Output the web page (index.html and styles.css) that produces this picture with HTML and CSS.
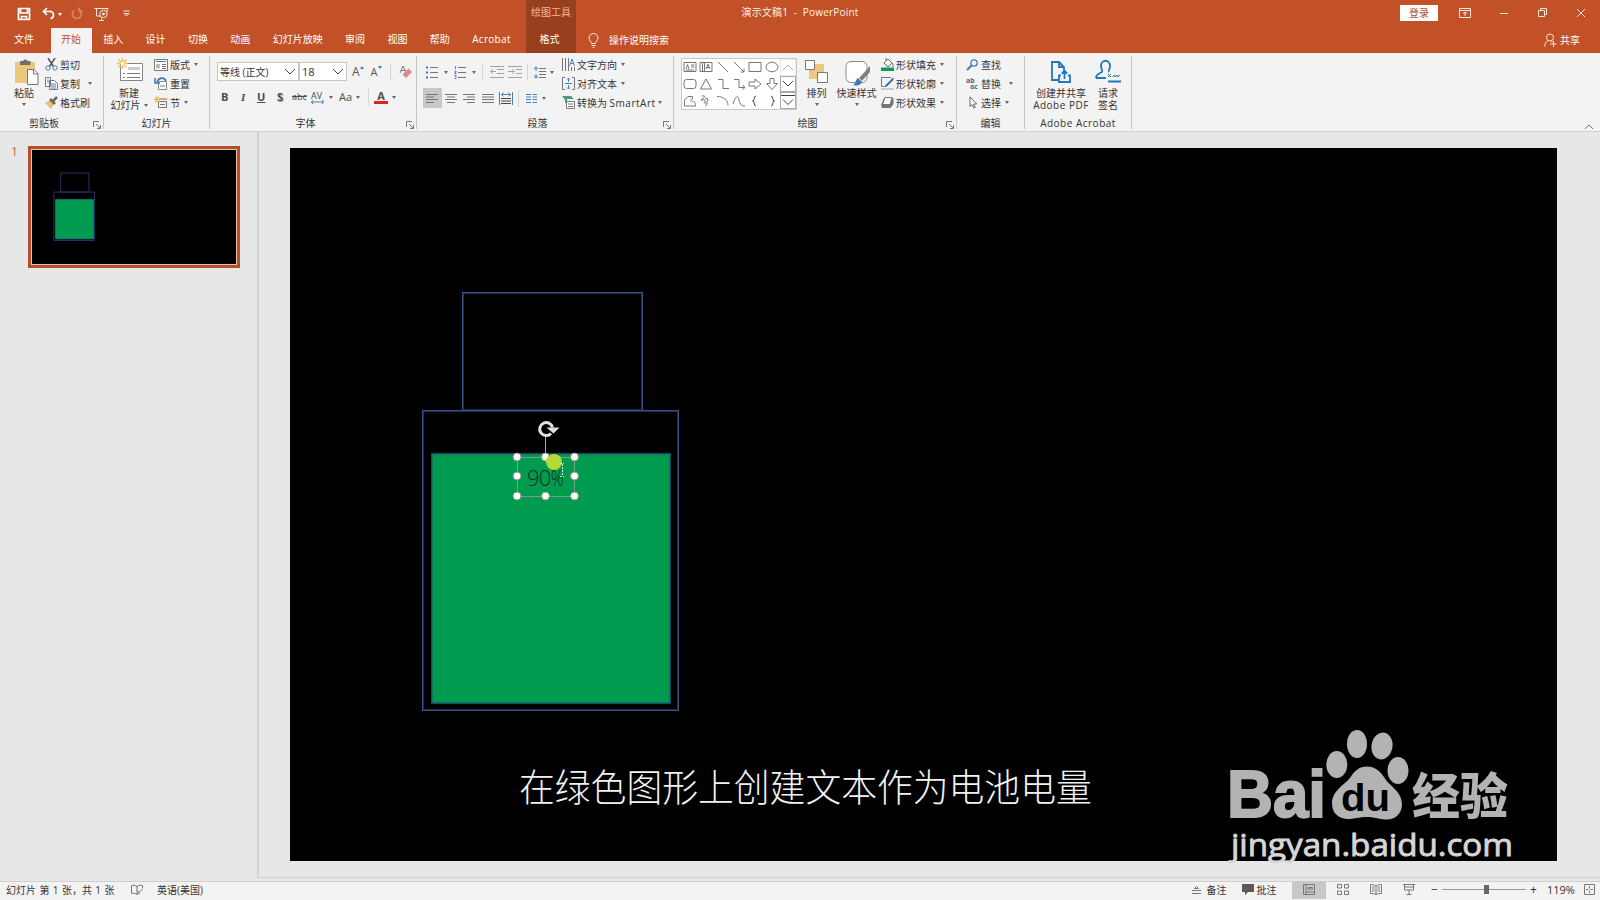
FILE: index.html
```html
<!DOCTYPE html>
<html lang="zh-CN">
<head>
  <meta charset="utf-8">
  <title>演示文稿1 - PowerPoint</title>
  <link rel="stylesheet" href="styles.css">
</head>
<body>
  <header class="titlebar">
    <div class="quick">
      <svg width="14" height="14" viewBox="0 0 14 14"><path d="M1.5 1.5h11v11h-11z M3.500 2v4h7v-4 M4.500 12.500V9.500h5v3" class="w2"/></svg>
      <svg class="undo" width="13" height="14" viewBox="0 0 13 14"><path d="M5 1 1.500 4.500 5 8 M2 4.500h5.500a3.500 3.500 0 0 1 1 7" class="w2"/></svg>
      <i class="caret light"></i>
      <svg class="redo" width="12" height="14" viewBox="0 0 12 14"><path d="M3 3.500a4.500 4.500 0 1 0 5.500-.2 M8 .8v3.200h3.500" class="w2"/></svg>
      <svg class="show" width="15" height="14" viewBox="0 0 15 14"><path d="M.5 1.500h14 M2.500 2v7h4 M13 2v3 M5 13.500h5 M7.500 11v2.500" class="w1"/><circle cx="9.500" cy="7" r="3.700" class="w1"/><path d="M8.500 5.300 11.500 7 8.500 8.700z" fill="#fff"/></svg>
      <svg class="more" width="7" height="8" viewBox="0 0 7 8"><path d="M.5 1h6 M1 3.500h5L3.500 6z" class="w1"/></svg>
    </div>
    <div class="context">绘图工具</div>
    <div class="doc-title">演示文稿1 &nbsp;-&nbsp; PowerPoint</div>
    <div class="window">
      <button class="login">登录</button>
      <svg width="12" height="10" viewBox="0 0 12 10"><path d="M.5.500h11v9H.5z M.5 2.500h11 M6 8V4 M4 5.500l2-1.500 2 1.500" class="w1"/></svg>
      <svg width="10" height="10" viewBox="0 0 10 10"><path d="M1 5.500h8" class="w1"/></svg>
      <svg width="10" height="10" viewBox="0 0 10 10"><path d="M.5 2.500h6v6h-6z M2.500 2.500v-2h6v6h-2" class="w1"/></svg>
      <svg width="10" height="10" viewBox="0 0 10 10"><path d="M1 1l8 8 M9 1L1 9" class="w1"/></svg>
    </div>
  </header>

  <nav class="tabs">
    <a class="file">文件</a>
    <a class="active">开始</a>
    <a>插入</a>
    <a>设计</a>
    <a>切换</a>
    <a>动画</a>
    <a>幻灯片放映</a>
    <a>审阅</a>
    <a>视图</a>
    <a>帮助</a>
    <a class="acrobat">Acrobat</a>
    <a class="format">格式</a>
    <svg class="bulb" width="11" height="15" viewBox="0 0 11 15"><path d="M3.500 10.500C3.500 8.500 1 7.500 1 5a4.500 4.500 0 0 1 9 0c0 2.500-2.500 3.500-2.500 5.500z M3.500 12.500h4 M4.500 14.300h2" class="w1"/></svg>
    <span>操作说明搜索</span>
    <div class="share">
      <svg width="13" height="14" viewBox="0 0 13 14"><circle cx="6" cy="4.500" r="3.500" class="w1"/><path d="M.7 13.500c0-3 1.500-5 3.500-5.700 M7.500 8l1 1 M6 11h6.500 M9.500 8v6" class="w1"/></svg>
      共享
    </div>
  </nav>

  <section class="ribbon">
    <div class="group clipboard">
      <div class="tools">
        <div class="big paste">
          <svg width="25" height="27" viewBox="0 0 25 27"><path d="M1 3h20v21H1z" fill="#ecc77d"/><path d="M6 2h3a2.500 2.500 0 0 1 4.500 0h3v4H6z" fill="#707070"/><path d="M13.500 10.500h6.500l4 4v11H13.500z" fill="#fff" stroke="#777"/><path d="M19.500 10.500v4.500h4.500" class="g1"/></svg>
          <span>粘贴</span><i class="caret"></i>
        </div>
        <div class="stack">
          <div><svg width="13" height="13" viewBox="0 0 13 13"><path d="M3 0l5.500 8.500 M10 0L4.500 8.500" stroke="#555" stroke-width="1.500"/><circle cx="3" cy="10" r="2.200" class="b1"/><circle cx="10" cy="10" r="2.200" class="b1"/></svg>剪切</div>
          <div><svg width="13" height="13" viewBox="0 0 13 13"><path d="M.5.500h5v9h-5z M4.500 3.500h5l3 3v6h-8z" fill="#fff" stroke="#777"/><path d="M2 3h2 M2 5h2 M6 7h5 M6 9h5 M6 11h5" class="b1"/></svg>复制<i class="caret far"></i></div>
          <div><svg width="13" height="13" viewBox="0 0 13 13"><path d="M0 7l5-3 4 4-3 5z" fill="#ecc07a"/><path d="M5 3l5 5 M8 5l4-4" stroke="#666" stroke-width="2.500"/></svg>格式刷</div>
        </div>
      </div>
      <div class="caption"><span>剪贴板</span><svg class="launch" width="8" height="8" viewBox="0 0 8 8"><path d="M.5 6V.5H6 M3 3l4 4 M7.500 4v3.500H4" class="g1"/></svg></div>
    </div>

    <div class="group slides">
      <div class="tools">
        <div class="big new-slide">
          <svg width="26" height="27" viewBox="0 0 26 27"><path d="M3.500 5.500h22v17h-22z" fill="#fff" stroke="#858585"/><path d="M11 9h12v3H11z" fill="#ccc"/><path d="M6 15.500h2 M10 15.500h13 M6 19.500h2 M10 19.500h13" class="g1"/><path d="M5.500 0v11 M0 5.500h11 M1.500 1.500l8 8 M9.500 1.500l-8 8" stroke="#edc15f" stroke-width="1.500"/><circle cx="5.500" cy="5.500" r="1.800" fill="#fff"/></svg>
          <span>新建</span><span>幻灯片<i class="caret"></i></span>
        </div>
        <div class="stack">
          <div><svg width="14" height="12" viewBox="0 0 14 12"><path d="M.5.500h13v11H.5z" fill="#fff" stroke="#777"/><path d="M2 2.500h10" class="b1"/><path d="M2 5h4v4.500H2z" fill="#bbb"/><path d="M8 5.500h4 M8 7.500h4 M8 9.500h4" class="g1"/></svg>版式<i class="caret"></i></div>
          <div><svg width="14" height="13" viewBox="0 0 14 13"><path d="M4.500 4.500h8v8h-8z" fill="#fff" stroke="#888"/><path d="M6 9h5" class="g1"/><path d="M12 4C10 0 5 0 3 5 M1 1v5h5" stroke="#3f78b5" stroke-width="1.600" fill="none"/></svg>重置</div>
          <div><svg width="14" height="13" viewBox="0 0 14 13"><path d="M5 3h8" stroke="#db8b48" stroke-width="1.500"/><path d="M4.500 5.500h8v6h-8z M6 8.500h5" class="g1"/><path d="M3 0v7 M0 3.500h6 M1 1l4 5 M5 1L1 6" stroke="#e8b25a"/></svg>节<i class="caret"></i></div>
        </div>
      </div>
      <div class="caption"><span>幻灯片</span></div>
    </div>

    <div class="group font">
      <div class="tools two-rows">
        <div class="row">
          <div class="combo name">等线 (正文)<svg width="12" height="7" viewBox="0 0 12 7"><path d="M1 1l5 5 5-5" class="k1"/></svg></div>
          <div class="combo size">18<svg width="12" height="7" viewBox="0 0 12 7"><path d="M1 1l5 5 5-5" class="k1"/></svg></div>
          <span class="grow">A<svg width="4" height="3" viewBox="0 0 4 3"><path d="M0 3l2-3 2 3z" fill="#3f78b5"/></svg></span>
          <span class="shrink">A<svg width="4" height="3" viewBox="0 0 4 3"><path d="M0 0l2 3 2-3z" fill="#3f78b5"/></svg></span>
          <i class="rule"></i>
          <svg class="clear" width="13" height="13" viewBox="0 0 13 13"><path d="M1 8l3-7 3 6 M2 5.500h4" class="g1"/><path d="M3.500 9.500l6-6L13 7l-6 6z" fill="#e5838f"/></svg>
        </div>
        <div class="row format-row">
          <b>B</b><em>I</em><u>U</u><b class="shadow">S</b><s>abc</s>
          <span class="av">AV<svg width="13" height="4" viewBox="0 0 13 4"><path d="M0 2h13 M2 0L.5 2 2 4 M11 0l1.500 2L11 4" class="b1"/></svg></span><i class="caret"></i>
          <span class="aa">Aa</span><i class="caret"></i>
          <i class="rule"></i>
          <span class="color">A</span><i class="caret"></i>
        </div>
      </div>
      <div class="caption"><span>字体</span><svg class="launch" width="8" height="8" viewBox="0 0 8 8"><path d="M.5 6V.5H6 M3 3l4 4 M7.500 4v3.500H4" class="g1"/></svg></div>
    </div>

    <div class="group paragraph">
      <div class="tools">
        <div class="two-rows para-tools">
          <div class="row">
            <svg width="12" height="13" viewBox="0 0 12 13"><path d="M4 1.500h8 M4 6.500h8 M4 11.500h8" class="g1"/><path d="M0 1.500h2 M0 6.500h2 M0 11.500h2" stroke="#3f78b5" stroke-width="2"/></svg><i class="caret c1"></i>
            <svg width="12" height="13" viewBox="0 0 12 13"><path d="M4 1.500h8 M4 6.500h8 M4 11.500h8" class="g1"/><path d="M1.500 0v3 M.5 5h1.500v1L.5 7.500h2 M.5 9.500h1.500v3H.5" class="b1"/></svg><i class="caret c1"></i>
            <i class="rule"></i>
            <svg class="faded indent" width="14" height="12" viewBox="0 0 14 12"><path d="M0 .5h14 M7 3.500h7 M7 7.500h7 M0 11.500h14 M0 5.500h6 M3 3L.5 5.500 3 8" class="g1"/></svg>
            <svg class="faded outdent" width="14" height="12" viewBox="0 0 14 12"><path d="M0 .5h14 M8 3.500h6 M8 7.500h6 M0 11.500h14 M0 5.500h6 M4 3l2.500 2.500L4 8" class="g1"/></svg>
            <i class="rule r2"></i>
            <svg class="spacing" width="12" height="13" viewBox="0 0 12 13"><path d="M5 2.500h7 M5 5.500h7 M5 8.500h7 M5 11.500h7" class="g1"/><path d="M2 .5v4.500 M0 3l2-2 2 2 M2 8v4.500 M0 10l2 2 2-2" class="b1"/></svg><i class="caret c2"></i>
          </div>
          <div class="row align">
            <span class="on"><svg width="12" height="9" viewBox="0 0 12 9"><path d="M0 .5h12 M0 3h8 M0 5.500h12 M0 8.500h8" class="g1"/></svg></span>
            <span><svg width="12" height="9" viewBox="0 0 12 9"><path d="M0 .5h12 M2 3h8 M0 5.500h12 M2 8.500h8" class="g1"/></svg></span>
            <span><svg width="12" height="9" viewBox="0 0 12 9"><path d="M0 .5h12 M4 3h8 M0 5.500h12 M4 8.500h8" class="g1"/></svg></span>
            <span><svg width="12" height="9" viewBox="0 0 12 9"><path d="M0 .5h12 M0 3h12 M0 5.500h12 M0 8.500h12" class="g1"/></svg></span>
            <span><svg width="14" height="13" viewBox="0 0 14 13"><path d="M.5 0v13 M13.500 0v13 M2.500 2.500h9 M4.500.5l-2 2 2 2 M9.500.5l2 2-2 2" class="b1"/><path d="M2 6.500h10 M2 9h10 M2 11.500h10" class="k1"/></svg></span>
            <i class="rule"></i>
            <svg class="cols" width="11" height="9" viewBox="0 0 11 9"><path d="M0 .5h5 M0 3h5 M0 5.500h5 M0 8.500h5 M6.500.5h5 M6.500 3h5 M6.500 5.500h5 M6.500 8.500h5" class="b1"/></svg><i class="caret"></i>
          </div>
        </div>
        <div class="stack">
          <div><svg width="13" height="13" viewBox="0 0 13 13"><path d="M.5 0v13 M3.500 0v13 M6.500 0v13 M9.500 9v4 M12.500 9v4" class="g1"/><path d="M7.500 8l2.500-7 2.500 7 M8.500 5.500h3" class="b1"/></svg>文字方向<i class="caret"></i></div>
          <div><svg width="13" height="13" viewBox="0 0 13 13"><path d="M3 .5H.5v12H3 M10 .5h2.500v12H10" class="g1"/><path d="M3 6.500h7 M6.500 1v4 M5 2.500L6.500 1 8 2.500 M6.500 8v4 M5 10.500L6.500 12 8 10.500" class="b1"/></svg>对齐文本<i class="caret"></i></div>
          <div><svg width="13" height="13" viewBox="0 0 13 13"><path d="M0 0h9l3 3H5v4H3V4z" fill="#4e9b80"/><path d="M4.500 5.500h8v7h-8z" fill="#fff" stroke="#777"/><path d="M6 8h5 M6 10.500h5" class="g1"/></svg>转换为&nbsp;<span class="lat">SmartArt</span><i class="caret near"></i></div>
        </div>
      </div>
      <div class="caption"><span>段落</span><svg class="launch" width="8" height="8" viewBox="0 0 8 8"><path d="M.5 6V.5H6 M3 3l4 4 M7.500 4v3.500H4" class="g1"/></svg></div>
    </div>

    <div class="group drawing">
      <div class="tools">
        <div class="gallery">
          <div class="shapes">
            <svg viewBox="0 0 14 12"><path d="M1 1.500h12v9H1z M3 8l1.500-4.500L6 8 M8 4h3.500 M8 6h3.500 M3 9h8" class="g1"/></svg>
            <svg viewBox="0 0 14 12"><path d="M1 1.500h12v9H1z M3.500 2v8 M5.500 2v8 M7 8l2-5 2 5 M8 6.500h2" class="g1"/></svg>
            <svg viewBox="0 0 14 12"><path d="M2 1l10 10" class="g1"/></svg>
            <svg viewBox="0 0 14 12"><path d="M2 1l10 10 M12 7.500V11H8.500" class="g1"/></svg>
            <svg viewBox="0 0 14 12"><path d="M1 1.500h12v9H1z" class="g1"/></svg>
            <svg viewBox="0 0 14 12"><ellipse cx="7" cy="6" rx="6" ry="4.800" class="g1"/></svg>
            <svg viewBox="0 0 14 12"><rect x="1" y="1.500" width="12" height="9" rx="2.500" class="g1"/></svg>
            <svg viewBox="0 0 14 12"><path d="M7 1L1.500 11h11z" class="g1"/></svg>
            <svg viewBox="0 0 14 12"><path d="M2 1.500h5v9h6" class="g1"/></svg>
            <svg viewBox="0 0 14 12"><path d="M2 1.500h5v8h6 M10.500 7l2.500 2.500-2.500 2" class="g1"/></svg>
            <svg viewBox="0 0 14 12"><path d="M1 4h6V1l6 5-6 5V8H1z" class="g1"/></svg>
            <svg viewBox="0 0 14 12"><path d="M5 .5v5H1.500L7 11.500 12.500 5.500H9v-5z" class="g1"/></svg>
            <svg viewBox="0 0 14 12"><path d="M1.500 11V5L5 1.500h4.500v2.500c-3 1-2 2.500 0 2.500 2-.5 3 .5 3 4.500z" class="g1"/></svg>
            <svg viewBox="0 0 14 12"><path d="M3 1c6-1 0 3-1 4s3-1 4 0-2 3 0 3 3-1 2 1-2 2-1 2.500 M6 3l3 1-1 3" class="g1"/></svg>
            <svg viewBox="0 0 14 12"><path d="M1 1.500c7 0 11 4 11 9" class="g1"/></svg>
            <svg viewBox="0 0 14 12"><path d="M1 9c3-9 5-9 6-4s3 6 6 6" class="g1"/></svg>
            <svg viewBox="0 0 14 12"><path d="M8 1C5 1 7.500 6 4.500 6 7.500 6 5 11 8 11" class="k1"/></svg>
            <svg viewBox="0 0 14 12"><path d="M6 1c3 0 .5 5 3.500 5C6.500 6 9 11 6 11" class="k1"/></svg>
          </div>
          <div class="scroll">
            <span class="off"><svg width="12" height="7" viewBox="0 0 12 7"><path d="M1 6l5-5 5 5" class="g1"/></svg></span>
            <span><svg width="12" height="7" viewBox="0 0 12 7"><path d="M1 1l5 5 5-5" class="k1"/></svg></span>
            <span><svg width="14" height="11" viewBox="0 0 14 11"><path d="M0 .5h14 M2 4.500l5 5 5-5" class="k1"/></svg></span>
          </div>
        </div>
        <div class="big arrange">
          <svg width="24" height="25" viewBox="0 0 24 25"><path d="M4 4h15v15H4z" fill="#edc77f"/><path d="M.5.500h9v9h-9z M12.500 12.500h10v10h-10z" fill="#fff" stroke="#777"/></svg>
          <span>排列</span><i class="caret"></i>
        </div>
        <div class="big quick-style">
          <svg width="26" height="27" viewBox="0 0 26 27"><rect x="1" y="1.500" width="21" height="21" rx="5" fill="#fff" stroke="#888"/><path d="M25 6v6l-8 9-3-3z" fill="#808080"/><path d="M13 18l4 4c-2 4-5 4-9 3 3-1 2-5 5-7z" fill="#3f78b5"/></svg>
          <span>快速样式</span><i class="caret"></i>
        </div>
        <div class="stack">
          <div><svg width="13" height="13" viewBox="0 0 13 13"><path d="M0 9.500h13V13H0z" fill="#11995a"/><path d="M3 5l4-4 4 4-4 4z" fill="#fff" stroke="#666"/><path d="M5 3V0 M10 5l2 1v3" class="g1"/></svg>形状填充<i class="caret"></i></div>
          <div><svg width="13" height="13" viewBox="0 0 13 13"><path d="M10 .5H.5v9h3" class="g1"/><path d="M12 1L5 8l-1 1.500L6 9l6-6z" fill="#3f78b5" stroke="#3f78b5"/><path d="M0 11h13v2H0z" fill="#c9cfd6"/></svg>形状轮廓<i class="caret"></i></div>
          <div><svg width="13" height="13" viewBox="0 0 13 13"><path d="M3 2h9.500v6l-3 4H1L0 9z" fill="#777"/><path d="M4 1.500h7l-2 7H1.500z" fill="#fff" stroke="#777" stroke-linejoin="round"/></svg>形状效果<i class="caret"></i></div>
        </div>
      </div>
      <div class="caption"><span>绘图</span><svg class="launch" width="8" height="8" viewBox="0 0 8 8"><path d="M.5 6V.5H6 M3 3l4 4 M7.500 4v3.500H4" class="g1"/></svg></div>
    </div>

    <div class="group editing">
      <div class="tools">
        <div class="stack">
          <div><svg width="13" height="12" viewBox="0 0 13 12"><circle cx="8" cy="4" r="3.200" fill="none" stroke="#467cae" stroke-width="1.300"/><path d="M5.500 6.500L1 11" stroke="#467cae" stroke-width="2"/></svg>查找</div>
          <div><span class="abac"><b>ab</b><b class="ac">ac</b></span>替换<i class="caret far"></i></div>
          <div><svg width="13" height="13" viewBox="0 0 13 13"><path d="M4 .8v9.700l2.200-2 1.500 3.500 1.500-.7L7.700 8h3z" fill="#fff" stroke="#666"/></svg>选择<i class="caret"></i></div>
        </div>
      </div>
      <div class="caption"><span>编辑</span></div>
    </div>

    <div class="group adobe">
      <div class="tools">
        <div class="big pdf">
          <svg width="22" height="23" viewBox="0 0 22 23"><path d="M8 19H2V1h7l5 5v5 M9 1v5h5 M11 14.500H9V21h11v-6.500h-2 M14.500 18v-8 M11.800 12.500l2.700-2.700 2.700 2.700" class="blue"/></svg>
          <span>创建并共享</span><span class="lat">Adobe PDF</span>
        </div>
        <div class="big sign">
          <svg width="26" height="25" viewBox="0 0 26 25"><path d="M1 19c0-4 3-4 6-6 1-1-1-3-1-6 0-7 9-7 9 0 0 3-2 5-1 6M1 19h10 M13 22.500h13" class="blue"/><path d="M13 15l3 3 M16 15l-3 3 M17.500 18l2-2 .5 2 2-2 .5 2 2.500-2" class="blue thin"/></svg>
          <span>请求</span><span>签名</span>
        </div>
      </div>
      <div class="caption"><span class="lat">Adobe Acrobat</span></div>
    </div>
    <svg class="collapse" width="10" height="6" viewBox="0 0 10 6"><path d="M1 5l4-4 4 4" class="g1"/></svg>
  </section>

  <main class="workspace">
    <aside class="panel">
      <span class="number">1</span>
      <div class="thumb">
        <svg width="205" height="116" viewBox="0 0 1267 713" preserveAspectRatio="none">
          <path d="M178 144h176v119H178z M136 263h252v303H136z" class="thumb-line"/>
          <path d="M146 309h236v247H146z" fill="#009b4e" stroke="#1b6680" stroke-width="6"/>
        </svg>
      </div>
    </aside>
    <div class="stage">
      <div class="slide">
        <div class="shape cap"></div>
        <div class="shape body"></div>
        <div class="shape charge"></div>
        <div class="textbox">
          <span class="value">90<span class="pct">%</span></span>
        </div>
        <svg class="handles" width="74" height="90" viewBox="0 0 74 90">
          <path d="M36.500 22v26" stroke="#a8aaa9"/>
          <path d="M42 19.500A6.500 6.500 0 1 1 43.500 13.500" fill="none" stroke="#e2e2e2" stroke-width="3"/>
          <path d="M37.500 13.500h13l-6 6z" fill="#e2e2e2"/>
          <g fill="#fff" stroke="#8b8f8c">
            <circle cx="8" cy="43" r="4"/><circle cx="36.500" cy="43" r="4"/><circle cx="65.500" cy="43" r="4"/>
            <circle cx="8" cy="62" r="4"/><circle cx="65.500" cy="62" r="4"/>
            <circle cx="8" cy="82" r="4"/><circle cx="36.500" cy="82" r="4"/><circle cx="65.500" cy="82" r="4"/>
          </g>
          <circle cx="45" cy="48" r="8" fill="#b4d935"/>
          <path d="M51 49.500h4 M53.500 50v12 M51 62.500h4" stroke="#cfe9d6" stroke-dasharray="2 1"/>
        </svg>
        <p class="subtitle">在绿色图形上创建文本作为电池电量</p>
        <svg class="watermark" width="300" height="150" viewBox="1220 725 300 150">
          <g fill="#b3b3b3">
            <text x="1227" y="817" textLength="99" lengthAdjust="spacingAndGlyphs" class="bai">Bai</text>
            <ellipse cx="1336.800" cy="764.500" rx="10.500" ry="13.500"/>
            <ellipse cx="1357" cy="744" rx="10" ry="14"/>
            <ellipse cx="1382" cy="746" rx="10.500" ry="13.500" transform="rotate(10 1382 746)"/>
            <ellipse cx="1398" cy="770.500" rx="10.500" ry="13.500"/>
            <path d="M1367 766.500c-8 0-13 5-16 10-4 7-19 13-19 27 0 10 7 15 15 15.500 8 0 12-2 20-2s12 2.500 20 2.500 15-6 15-15c0-13-12-18-17-26-4-6-9-12-18-12z"/>
            <text x="1412" y="813.500" textLength="96" lengthAdjust="spacingAndGlyphs" class="jy">经验</text>
          </g>
          <text x="1341" y="811" textLength="49" lengthAdjust="spacingAndGlyphs" class="du">du</text>
          <text x="1231" y="855.500" textLength="282" lengthAdjust="spacingAndGlyphs" class="url">jingyan.baidu.com</text>
        </svg>
      </div>
    </div>
  </main>

  <footer class="status">
    <span class="pages">幻灯片 第 1 张，共 1 张</span>
    <svg class="book" width="12" height="12" viewBox="0 0 12 12"><path d="M6 2.500C4 1 2 1 .5 1.500v8c1.500-.5 3.500-.5 5.500 1 1-.8 2-1.200 3-1.200 M6 2.500v8 M6 2.500c2-1.500 4-1.500 5.500-1V4 M6.500 6.500l1.500 2 4-4" class="g1"/></svg>
    <span>英语(美国)</span>
    <div class="right">
      <svg width="9" height="9" viewBox="0 0 9 9"><path d="M0 5.500h9 M0 8.500h9 M2.500 3.500h4L4.500 1.500z" class="g1"/></svg>
      <span class="notes">备注</span>
      <svg width="12" height="11" viewBox="0 0 12 11"><path d="M0 0h12v8H6l-3 3V8H0z" fill="#5a5a5a"/></svg>
      <span class="comments">批注</span>
      <span class="view on"><svg width="12" height="11" viewBox="0 0 12 11"><path d="M.5.500h11v10H.5z M3 .5v10 M3 8h8 M5 3.500h4.500v1.500H5z" class="g1"/></svg></span>
      <span class="view"><svg width="12" height="11" viewBox="0 0 12 11"><path d="M.5.500h4v3.500h-4z M7.500.500h4v3.500h-4z M.5 7h4v3.500h-4z M7.500 7h4v3.500h-4z" class="g1"/></svg></span>
      <span class="view"><svg width="12" height="11" viewBox="0 0 12 11"><path d="M6 2C4 .5 2 .5.5.500v9c2 0 4 0 5.500 1 1.500-1 3.500-1 5.500-1v-9C10 .5 8 .5 6 2z M6 2v9 M2 3h2.500 M2 5h2.500 M2 7h2.500 M7.500 3H10 M7.500 5H10 M7.500 7H10" class="g1"/></svg></span>
      <span class="view"><svg width="12" height="11" viewBox="0 0 12 11"><path d="M0 .5h12 M1.500 1v5h9V1 M6 6v4 M3.500 10.500h5 M1.500 3h9" class="g1"/></svg></span>
      <span class="minus">−</span>
      <div class="slider"><i></i></div>
      <span class="plus">+</span>
      <span class="zoom">119%</span>
      <svg width="11" height="11" viewBox="0 0 11 11"><path d="M.5.500h10v10H.5z M5.500 2v2.500 M5.500 6.500V9 M2 5.500h2.500 M6.500 5.500H9" class="g1"/></svg>
    </div>
  </footer>
</body>
</html>
```

FILE: styles.css
```css
* {
  box-sizing: border-box;
}

body {
  margin: 0;
  width: 1600px;
  height: 900px;
  overflow: hidden;
  display: flex;
  flex-direction: column;
  background: #e7e7e7;
  color: #333;
  font: 10px/12px "Open Sans", "Noto Sans CJK SC", sans-serif;
  white-space: nowrap;
}

svg {
  display: block;
  flex: none;
  fill: none;
}

.w1 { fill: none; stroke: #fbe6dc; }
.w2 { fill: none; stroke: #fff; stroke-width: 1.7; }
.g1 { fill: none; stroke: #777; }
.k1 { fill: none; stroke: #444; }
.b1 { fill: none; stroke: #4a80b8; }
.blue { fill: none; stroke: #2277bd; stroke-width: 1.8; }
.thin { stroke-width: 1; }

.lat {
  letter-spacing: .5px;
}

.caret {
  flex: none;
  display: inline-block;
  border: 2.5px solid transparent;
  border-top: 3px solid #666;
  border-bottom: 0;
}

.caret.light {
  border-top-color: #fff;
}

.rule {
  width: 1px;
  height: 17px;
  background: #d5d5d5;
}

/* title bar */
.titlebar {
  height: 28px;
  flex: none;
  display: flex;
  background: #c25127;
  color: #fff3ec;
}

.quick {
  width: 526px;
  padding-left: 17px;
  display: flex;
  align-items: center;
}

.undo { margin-left: 11px; }
.quick .caret { margin-left: 3px; }
.redo { margin-left: 9px; opacity: .3; }
.show { margin-left: 11px; }
.more { margin-left: 14px; }

.context {
  width: 50px;
  background: #983f1e;
  color: #f3b497;
  text-align: center;
  padding-top: 6px;
}

.doc-title {
  width: 448px;
  padding-top: 6px;
  text-align: center;
  letter-spacing: .2px;
}

.window {
  margin-left: auto;
  display: flex;
  align-items: center;
  padding: 0 14px 3px 0;
  gap: 28.500px;
}

.login {
  width: 38px;
  height: 16px;
  padding: 0;
  border: 0;
  margin-right: -8px;
  background: #fff;
  color: #a8502f;
  font: inherit;
}

/* tabs */
.tabs {
  height: 25px;
  flex: none;
  display: flex;
  align-items: center;
  background: #c25127;
  color: #fff;
}

.tabs a {
  height: 25px;
  padding: 0 11.200px;
  line-height: 22px;
}

.tabs > span {
  padding-bottom: 2px;
}

.tabs .file {
  width: 51px;
  padding: 0 14px;
}

.tabs .active {
  width: 41px;
  padding: 0 10px;
  background: #f3f3f3;
  color: #c25127;
}

.tabs .acrobat {
  width: 65px;
  letter-spacing: .3px;
}

.tabs .format {
  width: 50px;
  margin-left: auto;
  padding: 0 13.500px;
  background: #983f1e;
}

/* keeps the format tab lined up with the tool label above it */
.tabs .format {
  margin-left: 0;
}

.bulb { margin: 0 10px 0 12px; }

.share {
  margin-left: auto;
  margin-right: 20px;
  padding-bottom: 2px;
  display: flex;
  align-items: center;
  gap: 3px;
}

/* ribbon */
.ribbon {
  height: 79px;
  flex: none;
  display: flex;
  padding: 3px 0 2px;
  background: #f3f3f3;
  border-bottom: 1px solid #d2d2d2;
}

.group {
  flex: none;
  height: 73px;
  border-right: 1px solid #c6c6c6;
}

.clipboard { width: 104px; }
.slides { width: 106px; }
.font { width: 207px; }
.paragraph { width: 257px; }
.drawing { width: 283px; }
.editing { width: 68px; }
.adobe { width: 107px; }

.tools {
  height: 60px;
  display: flex;
}

.caption {
  display: flex;
  align-items: center;
  height: 14px;
}

.caption span {
  flex: 1;
  text-align: center;
}

.launch { margin: 3px 2px 0 5px; }

.big {
  display: flex;
  flex-direction: column;
  align-items: center;
  flex: none;
}

.big > svg { margin-bottom: 3px; }
.big > .caret { margin-top: 4px; }
.big span .caret { margin: 0 0 2px 3px; }

.stack {
  margin-top: -1px;
}

.stack > div {
  height: 19px;
  display: flex;
  align-items: center;
}

.stack svg { margin-right: 2px; }
.stack .caret { margin-left: 4px; }
.stack .caret.far { margin-left: 8px; }
.stack .caret.near { margin-left: 2px; }

.paste { width: 48px; padding-top: 3px; }
.paste > svg { margin-left: 4px; margin-bottom: 1px; }
.clipboard .stack { margin-left: -3px; }

.new-slide { width: 50px; padding-top: 2px; }
.new-slide > svg { margin-left: 2px; margin-bottom: 2px; }

.two-rows {
  display: flex;
  flex-direction: column;
}

.row {
  display: flex;
  align-items: center;
}

.font .tools { padding: 6px 0 0 7px; }

.combo {
  height: 19px;
  padding: 0 2px;
  display: flex;
  align-items: center;
  justify-content: space-between;
  border: 1px solid #c6c6c6;
  background: #fff;
}

.combo.name { width: 82px; }
.combo.size { width: 48px; font-size: 11px; }

.grow, .shrink {
  display: flex;
  font-size: 12px;
  color: #555;
}

.grow { margin-left: 5px; }
.shrink { margin-left: 7px; font-size: 11px; }

.font .rule { margin: 0 8px; }

.format-row {
  margin-top: 6px;
  height: 20px;
  padding-left: 4px;
  color: #4c4c4c;
  font-size: 11px;
}

.format-row b { width: 18px; }
.format-row em { width: 18px; font-family: "Liberation Serif", serif; font-weight: bold; padding-left: 2px; }
.format-row u { width: 20px; font-weight: bold; }
.format-row .shadow { width: 15px; text-shadow: 1px 1px 1px #999; }
.format-row s { width: 19px; font-size: 9px; }
.av { width: 14px; font-size: 9px; line-height: 9px; }
.format-row .caret { margin-left: 4px; }
.aa { margin-left: 6px; }
.font .format-row .rule { margin: 0 5px 0 8px; }

.color {
  width: 14px;
  height: 14px;
  line-height: 11px;
  text-align: center;
  font-weight: bold;
  border-bottom: 3px solid #dd2622;
}

.para-tools {
  width: 145px;
  padding: 6px 0 0 6px;
}

.para-tools .row:first-child {
  height: 20px;
  padding-left: 3px;
}

.para-tools .c1 { margin: 0 6px; }
.para-tools .c2 { margin-left: 4px; }
.faded { opacity: .65; }
.indent { margin-left: 7px; }
.outdent { margin-left: 4px; }
.r2 { margin: 0 6px 0 5px; }

.align { margin-top: 6px; }

.align span {
  width: 18.500px;
  height: 20px;
  display: flex;
  align-items: center;
  justify-content: center;
}

.align .on { background: #c8c8c8; }
.align .rule { margin: 0 7px 0 2px; }
.align .caret { margin-left: 5px; }

.gallery {
  margin: 2px 0 0 7px;
  width: 116px;
  height: 52px;
  display: flex;
  background: #fff;
  border: 1px solid #c9c9c9;
}

.shapes {
  width: 101px;
  display: grid;
  grid-template-columns: repeat(6, 1fr);
  grid-template-rows: repeat(3, 1fr);
  place-items: center;
}

.shapes svg {
  width: 14px;
  height: 12px;
}

.scroll {
  flex: 1;
  display: grid;
  grid-template-rows: repeat(3, 1fr);
}

.scroll span {
  display: flex;
  align-items: center;
  justify-content: center;
  border: 1px solid #aaa;
}

.scroll .off {
  border-color: #ddd;
  opacity: .6;
}

.arrange { width: 39px; padding-top: 4px; }
.arrange > svg { margin-bottom: 2px; }
.quick-style { width: 41px; padding-top: 4px; }
.quick-style > svg { margin: 0 0 0 2px; }
.drawing .stack { margin-left: 4px; }

.editing .stack { margin-left: 9px; }

.abac {
  width: 15px;
  display: flex;
  flex-direction: column;
  font-size: 7px;
  line-height: 6px;
  color: #74508b;
}

.abac .ac {
  padding-left: 4px;
  color: #3f6aa5;
}

.pdf { width: 54px; margin-left: 9px; padding-top: 5px; }
.pdf > svg { margin-bottom: 3px; }
.sign { width: 40px; padding-top: 3px; }
.sign > svg { margin-bottom: 3px; }

.collapse { margin: 68px 6px 0 auto; }

/* editing area */
.workspace {
  flex: 1;
  display: flex;
}

.panel {
  width: 259px;
  height: 746px;
  padding: 14px 0 0 11px;
  display: flex;
  align-items: flex-start;
  border-right: 2px solid #d3d3d3;
}

.number {
  width: 17px;
  font-size: 12px;
  color: #c0674a;
}

.thumb {
  border: 3px solid #b3502c;
  width: 212px;
  height: 122px;
  padding: 1px;
  background: #efc0a9;
}

.thumb svg {
  background: #000;
  width: 204px;
  height: 114px;
}

.thumb-line {
  fill: none;
  stroke: #2c3468;
  stroke-width: 6;
}

.stage {
  flex: 1;
  height: 746px;
  padding: 16px 0 0 31px;
  border-bottom: 1px solid #cfcfcf;
}

.slide {
  position: relative;
  width: 1267px;
  height: 713px;
  background: #000;
}

.shape {
  position: absolute;
  border: 1px solid #3a5186;
  box-shadow: inset 0 0 0 1px #1d2b4c;
}

.cap { left: 172px; top: 144px; width: 181px; height: 119px; }
.body { left: 132px; top: 262px; width: 257px; height: 301px; }
.charge { left: 141px; top: 305px; width: 240px; height: 251px; background: #009b4e; border-color: #1c4c6c; box-shadow: inset 0 0 0 1px #0d735c; }

.textbox {
  position: absolute;
  left: 227px;
  top: 309px;
  width: 58px;
  height: 40px;
  border: 1px solid #69a884;
}

.value {
  display: block;
  margin: 7px 0 0 9px;
  font: 300 22px/24px "Open Sans", sans-serif;
  letter-spacing: -.8px;
  color: #09301a;
}

.pct {
  display: inline-block;
  transform: scaleX(.7);
  transform-origin: left;
}

.handles {
  position: absolute;
  left: 219px;
  top: 266px;
}

.subtitle {
  position: absolute;
  left: 229px;
  top: 609px;
  margin: 0;
  font: 300 35.800px/54px "Noto Sans CJK SC", sans-serif;
  color: #f2f2f2;
  transform: scaleY(1.06);
}

.watermark {
  position: absolute;
  left: 930px;
  top: 577px;
}

.bai {
  font: bold 66px "Liberation Sans", sans-serif;
  stroke: #b3b3b3;
  stroke-width: 2;
}

.du {
  font: bold 39px "Liberation Sans", sans-serif;
  fill: #000;
}

.jy {
  font: 900 49px "Noto Sans CJK SC", sans-serif;
}

.url {
  font: 31px "Open Sans", sans-serif;
  fill: #d6d6d6;
  stroke: #d6d6d6;
  stroke-width: .9;
}

/* status bar */
.status {
  height: 19px;
  flex: none;
  display: flex;
  align-items: center;
  padding: 0 5px 3px 6px;
  background: #f3f3f3;
  border-top: 1px solid #d0d0d0;
}

.pages { width: 125px; word-spacing: .8px; }
.book { margin-right: 14px; }

.right {
  margin-left: auto;
  display: flex;
  align-items: center;
}

.notes { margin: 0 16px 0 5px; }
.comments { margin: 0 16px 0 2px; }

.view {
  width: 33.400px;
  height: 18px;
  display: flex;
  align-items: center;
  justify-content: center;
}

.view.on { background: #c8c8c8; }

.minus { margin-left: 5px; width: 11px; font-size: 12px; }

.slider {
  width: 84px;
  height: 9px;
  display: flex;
  justify-content: center;
  background: linear-gradient(#999, #999) center / 100% 1px no-repeat;
}

.slider i {
  width: 5px;
  margin-left: 4px;
  background: #666;
}

.plus { margin-left: 4px; width: 17px; font-size: 12px; }
.zoom { width: 37px; font-size: 11px; }
```
